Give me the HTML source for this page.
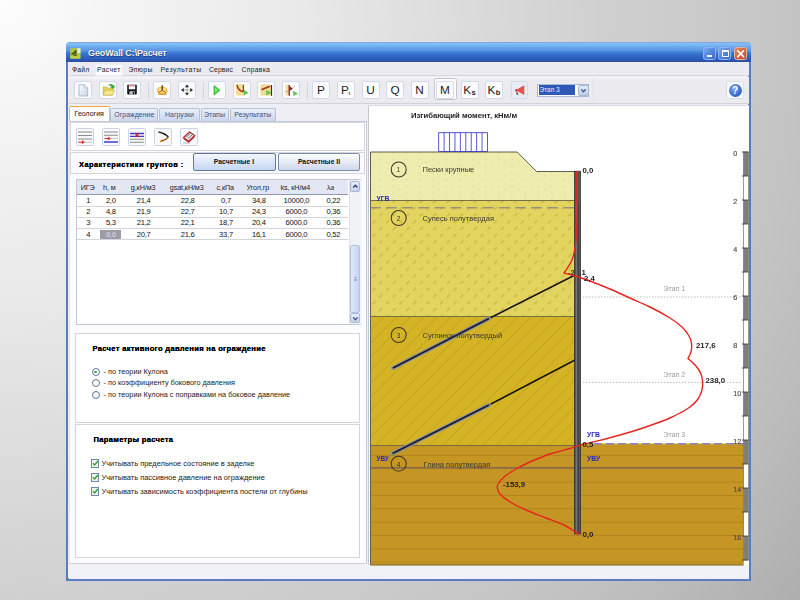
<!DOCTYPE html>
<html><head><meta charset="utf-8">
<style>
*{box-sizing:border-box;margin:0;padding:0}
html,body{width:800px;height:600px;overflow:hidden}
body{font-family:"Liberation Sans",sans-serif;font-size:7.5px;color:#111;
background:radial-gradient(circle 1000px at 0 0,#fdfdfd 0%,#f2f2f2 15%,#e9e9e9 30%,#dfdfdf 42%,#d0d0d0 60%,#c4c4c4 80%,#bababa 90%,#aeaeae 100%);position:relative}
.abs{position:absolute}
.wb{position:absolute;top:4.700px;width:13px;height:13px;border:1px solid #8cb4f2;border-radius:2.500px;background:linear-gradient(135deg,#7aaaf0,#4c80dc 60%,#3c6cc8)}
#win{position:absolute;left:66px;top:43px;width:685px;height:538px;background:#efeff4;border:2.5px solid #5a7cc0;border-right-width:3px;border-bottom-width:3px;border-top:none;border-radius:3.500px 3.500px 0 0;}
#title{position:absolute;left:66px;top:42.200px;width:685px;height:19.500px;border-radius:3.500px 3.500px 0 0;
background:linear-gradient(#7c9ed0 0%,#86bff8 7%,#7cbaf6 13%,#6aa8ec 26%,#5c98e4 41%,#4a8adc 48%,#3a7cd2 53%,#3670cc 62%,#3266c6 72%,#2d5ab6 88%,#2c4c9e 100%);}
#title .t{position:absolute;left:22px;top:6px;color:#f6f2e4;font-weight:bold;font-size:9px;letter-spacing:-0.100px;text-shadow:0.5px 0.5px 0 #1b3f8a}
#menu{position:absolute;left:68.5px;top:61.700px;width:680px;height:14.800px;background:#ecebf1;border-bottom:1px solid #d6d6dc}
#menu span{position:absolute;top:3.900px;font-size:6.8px;color:#222}
#tb{position:absolute;left:68.5px;top:76.500px;width:680px;height:27.800px;background:linear-gradient(#f8f8fb 0,#f1f0f5 5%,#ecebf0 12%,#ebeaef 100%);border-bottom:1px solid #d2d2d8}
.b{position:absolute;top:4px;width:18px;height:18px;border:1px solid #d3d9ea;background:#fbfcff;border-radius:2px}
.sep{position:absolute;top:5px;width:1px;height:17px;background:#d0d4e0}
.lt{position:absolute;top:4px;width:18px;height:18px;border:1px solid #d3d9ea;background:#fbfcff;border-radius:2px;font-size:11.800px;text-align:center;line-height:16.500px;color:#1c1c1c}

#tabs{position:absolute;left:68.5px;top:104.300px;width:299.500px;height:17px;background:#eeeef4}
.tab{position:absolute;top:4px;height:13px;border:1px solid #b9c3d6;border-bottom:none;border-radius:2px 2px 0 0;background:linear-gradient(#eaf0fa,#c9d6ee);font-size:7px;color:#44527a;text-align:center;line-height:11px}
.tab.act{top:1.5px;height:16px;background:#fcfcfe;border-color:#b9c3d6;border-top:1.5px solid #f0a83c;line-height:13px;color:#111}
.pan{position:absolute;background:#fff;border:1px solid #d4d6dc}
.ib{position:absolute;top:5px;border-radius:1.500px;width:18px;height:18px;border:1px solid #ccd3e6;background:#f8f9fd}
.xb{position:absolute;top:152.800px;height:18.200px;border:1px solid #7d8db0;border-radius:2px;background:linear-gradient(#fdfdff,#e2e7f2 60%,#cfd7ea);font-weight:bold;font-size:6.8px;text-align:center;line-height:16px;color:#111}
.hd{position:absolute;top:1px;height:14px;line-height:14px;font-size:7.200px;letter-spacing:-0.100px;color:#223;text-align:center;transform:translateX(-50%);white-space:nowrap}
.c{position:absolute;font-size:7.600px;letter-spacing:-0.250px;transform:translateX(-50%);white-space:nowrap;line-height:11px;color:#111}
.h1{position:absolute;font-weight:bold;font-size:7.6px;white-space:nowrap;color:#000;text-shadow:0 0 0.300px #000;letter-spacing:0.3px}
.tx{position:absolute;font-size:7.300px;white-space:nowrap;color:#222}
.rd{position:absolute;width:8px;height:8px;border:1px solid #5f7896;border-radius:50%;background:#fdfdfd}
.cb{position:absolute;width:8.500px;height:8.500px;border:1px solid #6f8aa8;background:#eef4ea;margin-left:-0.600px;margin-top:-0.300px}
</style></head><body>
<div id="wrap" style="position:absolute;left:0;top:0;width:800px;height:600px;filter:blur(0.5px)">
<div id="win"></div>
<div id="title"><div class="t">GeoWall C:\Расчет</div>
<svg class="abs" style="left:3.500px;top:5.500px" width="11" height="11" viewBox="0 0 11 11"><rect x="0.200" y="0.200" width="10.300" height="10.300" rx="1" fill="#b4c63a"/><rect x="7.200" y="0.200" width="3.300" height="5" fill="#dceaf8"/><path d="M1.500 6.500L6.500 2.200M5.800 2.500L6 8.800M4.200 5.200L4 8.500" stroke="#3a4a10" stroke-width="1.200" fill="none"/><rect x="0.200" y="8.300" width="10.300" height="2.200" rx="0.800" fill="#c4d840"/></svg>
<div class="wb" style="left:637px"><div class="abs" style="left:2.500px;top:7.500px;width:5px;height:2px;background:#f4f8ff"></div></div>
<div class="wb" style="left:652.300px"><div class="abs" style="left:2.500px;top:2.500px;width:7.500px;height:7px;border:1px solid #f4f8ff;border-top-width:2.200px"></div></div>
<div class="wb" style="left:667.600px;background:linear-gradient(135deg,#e8906c,#d4603c 50%,#c04c30);border-color:#e8b09c"><svg class="abs" style="left:0;top:0" width="11" height="11"><path d="M2.800 2.800L8.600 8.600M8.600 2.800L2.800 8.600" stroke="#fff" stroke-width="1.700" stroke-linecap="round"/></svg></div>
</div>
<div id="menu">
<div class="abs" style="left:26.500px;top:2px;width:27.500px;height:12.500px;background:#fafbfe;border:1px solid #eceef6"></div>
<span style="left:3.500px;letter-spacing:0.150px">Файл</span><span style="left:28.500px;letter-spacing:0.330px">Расчет</span><span style="left:60px;letter-spacing:0.400px">Эпюры</span><span style="left:92px;letter-spacing:0.550px">Результаты</span><span style="left:140.500px;letter-spacing:0.100px">Сервис</span><span style="left:173px;letter-spacing:0.280px">Справка</span>
</div>
<div id="tb"><div class="b" style="left:5.5px"><svg style="position:absolute;left:-1px;top:-1px" width="18" height="18" viewBox="0 0 18 18"><defs><linearGradient id="gnew" x1="0" y1="0" x2="1" y2="1"><stop offset="0" stop-color="#fbfcff"/><stop offset="1" stop-color="#cdd5e8"/></linearGradient></defs><path d="M5 3.800h5.500l3.200 3.200v8h-8.700z" fill="url(#gnew)" stroke="#a9b2cc" stroke-width="0.900"/><path d="M10.500 3.800v3.200h3.200" fill="#eef1f9" stroke="#a9b2cc" stroke-width="0.700"/></svg></div><div class="b" style="left:30.0px"><svg style="position:absolute;left:-1px;top:-1px" width="18" height="18" viewBox="0 0 18 18"><path d="M4.200 6h3.600l1 1.200h4.700v6.800H4.200z" fill="#ecd85c" stroke="#c0a838" stroke-width="0.700"/><path d="M4.200 14l1.800-4.800h9.500L13.600 14z" fill="#f6ec8e" stroke="#c8b040" stroke-width="0.700"/><path d="M9.500 4.200c2-1.600 4.300-1.100 5.200 1l1-.4-1.200 3-2.800-1.700 1.100-.3c-.7-1.200-1.800-1.700-3.300-1.600z" fill="#3aa83a" stroke="#2a8a2a" stroke-width="0.400"/></svg></div><div class="b" style="left:54.5px"><svg style="position:absolute;left:-1px;top:-1px" width="18" height="18" viewBox="0 0 18 18"><rect x="4.200" y="3.800" width="9.600" height="9.800" rx="0.800" fill="#16161a"/><rect x="5.800" y="4.300" width="6.400" height="4" fill="#f8f8fc"/><rect x="5.800" y="4.300" width="6.400" height="1.100" fill="#f08090"/><rect x="6.500" y="10.200" width="5.300" height="3.400" fill="#c0c4cc"/><rect x="9.800" y="10.800" width="1.400" height="2.400" fill="#16161a"/></svg></div><div class="b" style="left:84.5px"><svg style="position:absolute;left:-1px;top:-1px" width="18" height="18" viewBox="0 0 18 18"><ellipse cx="9.200" cy="9.600" rx="5.300" ry="4" fill="#f0b63e"/><ellipse cx="9.200" cy="9.200" rx="3.800" ry="2.800" fill="#f8de88"/><path d="M9.200 4.300v5.200" stroke="#3a2a10" stroke-width="1.200"/><path d="M5.500 11.500l3.700-2 3.700 2" stroke="#a06a18" stroke-width="1" fill="none"/><path d="M5 13.300h8.500" stroke="#d09030" stroke-width="1"/></svg></div><div class="b" style="left:109.5px"><svg style="position:absolute;left:-1px;top:-1px" width="18" height="18" viewBox="0 0 18 18"><path d="M9 3.500l2 2.800h-4zM9 14.500l2-2.800h-4zM3 9l2.800-2v4zM15 9l-2.800-2v4z" fill="#222"/><path d="M9 6.500v5M6 9h6" stroke="#555" stroke-width="0.800" stroke-dasharray="0.800 0.800"/></svg></div><div class="b" style="left:139.5px"><svg style="position:absolute;left:-1px;top:-1px" width="18" height="18" viewBox="0 0 18 18"><path d="M6 4.500L12 9.300l-6 4.700z" fill="#40cc40" stroke="#2cac2c" stroke-width="0.700" stroke-linejoin="round"/><path d="M6.800 6.500L10 9.300l-3.200 2.500z" fill="#88e888"/></svg></div><div class="b" style="left:164.0px"><svg style="position:absolute;left:-1px;top:-1px" width="18" height="18" viewBox="0 0 18 18"><rect x="3" y="3" width="8.500" height="11.500" fill="#f2e09a"/><path d="M4 4c.6 3.500 2.500 6 6.500 6.800" stroke="#b0381c" stroke-width="1.500" fill="none"/><path d="M10.300 4v6.500" stroke="#444" stroke-width="1.100"/><path d="M11 9.300l4.200 2.400-4.200 2.400z" fill="#58d058" stroke="#38a838" stroke-width="0.400"/></svg></div><div class="b" style="left:188.5px"><svg style="position:absolute;left:-1px;top:-1px" width="18" height="18" viewBox="0 0 18 18"><rect x="3.500" y="3.500" width="10.500" height="11" fill="#f2dc90"/><path d="M4.500 8.800l8.300-3.600" stroke="#a83020" stroke-width="1.700"/><path d="M14.500 4v10.800" stroke="#3a3020" stroke-width="1.200"/><path d="M9.600 9.300l4 2.400-4 2.400z" fill="#58d058" stroke="#38a838" stroke-width="0.400"/></svg></div><div class="b" style="left:213.0px"><svg style="position:absolute;left:-1px;top:-1px" width="18" height="18" viewBox="0 0 18 18"><rect x="3.500" y="3.500" width="3.200" height="11" fill="#f2e09a"/><path d="M7.200 4v10.800" stroke="#7a2018" stroke-width="1.300"/><path d="M7.500 5l3.300 2.800-3.300 2.200z" fill="#8a1c18"/><path d="M10 7.500l3-2.500M3.500 10.500h4" stroke="#b08070" stroke-width="0.600"/><path d="M11.500 10.200l4 2.300-4 2.300z" fill="#58d058" stroke="#38a838" stroke-width="0.400"/></svg></div><div class="sep" style="left:79.0px"></div><div class="sep" style="left:134.5px"></div><div class="sep" style="left:238.0px"></div><div class="abs" style="left:365.0px;top:1.500px;width:23px;height:22px;background:#fff;border:1px solid #c3c5cc;border-radius:2.500px"></div><div class="lt" style="left:243.5px">P</div><div class="lt" style="left:268.0px">P<span style="font-size:5.800px;margin-left:-0.300px;position:relative;top:1.300px">t</span></div><div class="lt" style="left:293.0px">U</div><div class="lt" style="left:317.5px">Q</div><div class="lt" style="left:342.0px">N</div><div class="lt" style="left:367.5px">M</div><div class="lt" style="left:392.0px">K<span style="font-size:7.500px;font-weight:bold;margin-left:0.300px;position:relative;top:1px">s</span></div><div class="lt" style="left:416.5px">K<span style="font-size:7.500px;font-weight:bold;margin-left:0.300px;position:relative;top:1px">b</span></div><div class="b" style="left:442.0px;width:17px;height:18px"><svg style="position:absolute;left:-1px;top:-1px" width="17" height="18" viewBox="0 0 17 18"><rect x="1" y="1" width="15" height="16" fill="#e9ecf3"/><path d="M4.500 9.300l8.800-5v9.600z" fill="#e25454"/><path d="M4.300 8.200h2v2.400h-2z" fill="#c43c3c"/><path d="M5 11.200h1.800l.6 2.800h-1.600z" fill="#a85050"/></svg></div><div class="abs" style="left:468.5px;top:7px;width:52px;height:13px;border:1px solid #aab8d8;background:#fff"></div><div class="abs" style="left:470.0px;top:8.500px;width:36.500px;height:10px;background:#2f58b8;color:#e8ecff;font-size:6.500px;line-height:10px;padding-left:1px">Этап 3</div><div class="abs" style="left:509.0px;top:8px;width:11px;height:11px;border:1px solid #a9b6d2;border-radius:2px;background:linear-gradient(#e6ecfa,#bccbec)"><svg width="9" height="9" style="position:absolute;left:0;top:0"><path d="M2.200 3.400L4.400 5.700L6.600 3.400" stroke="#3c4f7c" stroke-width="1.300" fill="none"/></svg></div><div class="abs" style="left:524.5px;top:1px;width:1px;height:25px;background:#dfe2ea"></div><div class="abs" style="left:657.500px;top:4.300px;width:18px;height:18.200px;border:1px solid #dcdfea;background:#f7f8fc;border-radius:2px"></div><div class="abs" style="left:660.0px;top:7px;width:13px;height:13px;border-radius:50%;background:radial-gradient(circle at 40% 35%,#7aa8f0,#2f62d0 70%,#2850b0);color:#fff;font-weight:bold;font-size:10px;text-align:center;line-height:13px">?</div></div>
<div id="tabs">
<div class="tab act" style="left:0.5px;width:40.5px">Геология</div>
<div class="tab" style="left:41.800px;width:48px">Ограждение</div>
<div class="tab" style="left:90.800px;width:40.300px">Нагрузки</div>
<div class="tab" style="left:132px;width:28px">Этапы</div>
<div class="tab" style="left:161px;width:46.500px">Результаты</div>
</div>
<div id="left" class="abs" style="left:69px;top:120.500px;width:297.500px;height:443.500px;background:#fcfcfe;border:1px solid #c3cbdb;border-left-color:#e4e8f2;border-bottom-color:#cfd3de">
</div>
<div class="pan" id="p1" style="left:70px;top:121.500px;width:295px;height:29.500px">
 <div class="ib" style="left:5.0px"><svg style="position:absolute;left:-1px;top:-1px" width="18" height="18" viewBox="0 0 18 18"><path d="M2 4h14M2 7.500h14M2 11h14" stroke="#8a8a8a" stroke-width="1.100"/><path d="M2.500 14.200h13.500" stroke="#aaa" stroke-width="0.600"/><path d="M2.500 14.200h5M6 12.800l2 1.400-2 1.400" stroke="#e03030" stroke-width="1.100" fill="none"/></svg></div>
 <div class="ib" style="left:30.5px"><svg style="position:absolute;left:-1px;top:-1px" width="18" height="18" viewBox="0 0 18 18"><path d="M2 4h14M2 7.200h14" stroke="#8a8a8a" stroke-width="1.100"/><path d="M2.500 10.500h13.500" stroke="#aaa" stroke-width="0.600"/><path d="M2.500 10.500h5M6 9.100l2 1.400-2 1.400" stroke="#e03030" stroke-width="1.100" fill="none"/><path d="M2 14h14" stroke="#3030d0" stroke-width="1.400"/></svg></div>
 <div class="ib" style="left:56.5px"><svg style="position:absolute;left:-1px;top:-1px" width="18" height="18" viewBox="0 0 18 18"><path d="M2 5.500h14M2 8.300h14" stroke="#3838d0" stroke-width="1.300"/><path d="M7 5l4 4M11 5l-4 4" stroke="#e02828" stroke-width="1.300"/><path d="M2 11.200h14M2 14.200h14" stroke="#8a8a8a" stroke-width="1.100"/></svg></div>
 <div class="ib" style="left:82.5px"><svg style="position:absolute;left:-1px;top:-1px" width="18" height="18" viewBox="0 0 18 18"><path d="M4.500 4c4 .8 7.800 2.500 9.800 5.200" stroke="#2a2220" stroke-width="1.600" fill="none"/><path d="M14.300 9.200c-2 2.300-5 3.600-8.300 4.300" stroke="#e08838" stroke-width="1.300" fill="none"/><path d="M14.300 9.200c-2 2-4.500 3.200-7.300 3.800" stroke="#503020" stroke-width="0.600" fill="none"/></svg></div>
 <div class="ib" style="left:108.5px"><svg style="position:absolute;left:-1px;top:-1px" width="18" height="18" viewBox="0 0 18 18"><path d="M3.500 9.500l6-5.500 5.200 3.500-6 5.800z" fill="#f4f0ec" stroke="#b02828" stroke-width="1.200"/><path d="M3.500 9.500l5.200 3.800 6-5.800v1.800l-6 5.800-5.200-3.800z" fill="#c03030"/><path d="M6 9.300l4.500-4M8 10.500l4.500-4" stroke="#333" stroke-width="0.700"/><path d="M3 15h7" stroke="#999" stroke-width="0.700"/></svg></div>
</div>
<div class="pan" id="p2" style="left:70px;top:152px;width:295px;height:22px;background:#fbfbfd"></div>
<div class="h1" style="left:79px;top:159.5px;font-size:7.4px;letter-spacing:0.45px">Характеристики грунтов :</div>
<div class="xb" style="left:192.500px;width:83px;background:linear-gradient(#f4f7fe,#dbe5f8 55%,#c6d5f1);border-color:#62789f">Расчетные I</div>
<div class="xb" style="left:278px;width:82px">Расчетные II</div>
<div class="pan" id="tbl" style="left:75.5px;top:179px;width:285px;height:146px;border-color:#c4c8d0">
 <div class="abs" style="left:0;top:0;width:271px;height:14.700px;background:#e2e7f3;border-bottom:1.200px solid #8f98ae"></div>
 <div class="hd" style="left:11.1px">ИГЭ</div><div class="hd" style="left:32.9px">h, м</div><div class="hd" style="left:66.6px">g,кН/м3</div><div class="hd" style="left:110.2px">gsat,кН/м3</div><div class="hd" style="left:148.7px">c,кПа</div><div class="hd" style="left:181.3px">Угол,гр</div><div class="hd" style="left:218.8px">ks, кН/м4</div><div class="hd" style="left:254.0px">λ<i style="font-size:6.500px">a</i></div>
 <div id="rows" style="position:absolute;left:0;top:0"><div class="abs" style="left:0;top:25.50px;width:271px;height:1px;background:#d3d5dc"></div><div class="c" style="left:11.7px;top:14.90px">1</div><div class="c" style="left:34.3px;top:14.90px">2,0</div><div class="c" style="left:67.1px;top:14.90px">21,4</div><div class="c" style="left:111.2px;top:14.90px">22,8</div><div class="c" style="left:149.5px;top:14.90px">0,7</div><div class="c" style="left:182.3px;top:14.90px">34,8</div><div class="c" style="left:219.9px;top:14.90px">10000,0</div><div class="c" style="left:256.8px;top:14.90px">0,22</div><div class="abs" style="left:0;top:36.75px;width:271px;height:1px;background:#d3d5dc"></div><div class="c" style="left:11.7px;top:26.10px">2</div><div class="c" style="left:34.3px;top:26.10px">4,8</div><div class="c" style="left:67.1px;top:26.10px">21,9</div><div class="c" style="left:111.2px;top:26.10px">22,7</div><div class="c" style="left:149.5px;top:26.10px">10,7</div><div class="c" style="left:182.3px;top:26.10px">24,3</div><div class="c" style="left:219.9px;top:26.10px">6000,0</div><div class="c" style="left:256.8px;top:26.10px">0,36</div><div class="abs" style="left:0;top:48.00px;width:271px;height:1px;background:#d3d5dc"></div><div class="c" style="left:11.7px;top:37.40px">3</div><div class="c" style="left:34.3px;top:37.40px">5,3</div><div class="c" style="left:67.1px;top:37.40px">21,2</div><div class="c" style="left:111.2px;top:37.40px">22,1</div><div class="c" style="left:149.5px;top:37.40px">18,7</div><div class="c" style="left:182.3px;top:37.40px">20,4</div><div class="c" style="left:219.9px;top:37.40px">6000,0</div><div class="c" style="left:256.8px;top:37.40px">0,36</div><div class="abs" style="left:0;top:59.25px;width:271px;height:1px;background:#d3d5dc"></div><div class="abs" style="left:23.100px;top:49.80px;width:21px;height:9.600px;background:#9c9ca6"></div><div class="c" style="left:11.7px;top:48.90px">4</div><div class="c" style="left:34.3px;top:48.90px;color:#dcdce4">8,6</div><div class="c" style="left:67.1px;top:48.90px">20,7</div><div class="c" style="left:111.2px;top:48.90px">21,6</div><div class="c" style="left:149.5px;top:48.90px">33,7</div><div class="c" style="left:182.3px;top:48.90px">16,1</div><div class="c" style="left:219.9px;top:48.90px">6000,0</div><div class="c" style="left:256.8px;top:48.90px">0,52</div></div>
 <div class="abs" style="left:272px;top:0;width:12px;height:144px;background:#f1f2f7;border-left:1px solid #dde0e8"></div>
 <div class="abs" style="left:273px;top:1px;width:10.5px;height:10.5px;border:1px solid #a9b6d2;border-radius:2px;background:linear-gradient(#e6ecfa,#c6d3ee)"><svg width="9" height="9" style="position:absolute;left:0;top:0"><path d="M2.2 5.5 L4.4 3.2 L6.6 5.5" stroke="#3c4f7c" stroke-width="1.3" fill="none"/></svg></div>
 <div class="abs" style="left:273px;top:132.5px;width:10.5px;height:10.5px;border:1px solid #a9b6d2;border-radius:2px;background:linear-gradient(#e6ecfa,#c6d3ee)"><svg width="9" height="9" style="position:absolute;left:0;top:0"><path d="M2.2 3.4 L4.4 5.7 L6.6 3.4" stroke="#3c4f7c" stroke-width="1.3" fill="none"/></svg></div>
 <div class="abs" style="left:273px;top:64.500px;width:10.500px;height:68.500px;border:1px solid #b4c2e0;border-radius:2px;background:linear-gradient(90deg,#dfe8fb,#c4d3f2)"><div class="abs" style="left:3px;top:31px;width:3.500px;height:4.500px;border-top:1px solid #9fb0d4;border-bottom:1px solid #9fb0d4"><div class="abs" style="left:0;top:1px;width:3.500px;height:1px;background:#9fb0d4"></div></div></div>
</div>
<div class="pan" id="p3" style="left:75px;top:332.5px;width:285px;height:90.5px"></div>
<div class="pan" id="p4" style="left:75px;top:424px;width:285px;height:134px"></div>
<div class="h1" style="left:92.5px;top:344px">Расчет активного давления на ограждение</div>
<div class="rd" style="left:91.5px;top:368px"><div class="abs" style="left:1.5px;top:1.5px;width:2.8px;height:2.8px;border-radius:50%;background:#3fa53f"></div></div>
<div class="rd" style="left:91.5px;top:379.100px"></div>
<div class="rd" style="left:91.5px;top:391.300px"></div>
<div class="tx" style="left:103.5px;top:366.800px">- по теории Кулона</div>
<div class="tx" style="left:103.5px;top:378.100px">- по коэффициенту бокового давления</div>
<div class="tx" style="left:103.5px;top:390.400px">- по теории Кулона с поправками на боковое давление</div>
<div class="h1" style="left:93.5px;top:434.600px">Параметры расчета</div>
<div class="cb" style="left:91.5px;top:459.5px"><svg class="abs" style="left:0;top:0" width="7" height="7"><path d="M1 3.200L2.700 5L5.800 1" stroke="#30a030" stroke-width="1.300" fill="none"/></svg></div><div class="cb" style="left:91.5px;top:473.5px"><svg class="abs" style="left:0;top:0" width="7" height="7"><path d="M1 3.200L2.700 5L5.800 1" stroke="#30a030" stroke-width="1.300" fill="none"/></svg></div><div class="cb" style="left:91.5px;top:487.5px"><svg class="abs" style="left:0;top:0" width="7" height="7"><path d="M1 3.200L2.700 5L5.800 1" stroke="#30a030" stroke-width="1.300" fill="none"/></svg></div>
<div class="tx" style="font-size:7.450px;left:101.5px;top:458.600px">Учитывать предельное состояние в заделке</div>
<div class="tx" style="font-size:7.450px;left:101.5px;top:472.600px">Учитывать пассивное давление на ограждение</div>
<div class="tx" style="font-size:7.450px;left:101.5px;top:486.600px">Учитывать зависимость коэффициента постели от глубины</div>
<div id="status" class="abs" style="left:68.5px;top:565px;width:680px;height:13.5px;background:#f1f2f8"></div>
<div id="right" class="abs" style="left:368px;top:105px;width:381px;height:460px;background:#fff;border-left:1px solid #c6c8d0;border-top:1px solid #d8dae2"></div>

<svg id="dg" class="abs" style="left:0;top:0" width="800" height="600" viewBox="0 0 800 600">
<defs>
<pattern id="sp1" width="13.2" height="13.5" patternUnits="userSpaceOnUse" x="485" y="159">
 <rect x="0" y="0" width="1.200" height="1.200" fill="#d4d094"/><rect x="0" y="6.750" width="1.200" height="1.200" fill="#d4d094"/><rect x="6.400" y="2.800" width="1.200" height="1.200" fill="#d8d49a"/>
</pattern>
<pattern id="sp2" width="13.5" height="13.5" patternUnits="userSpaceOnUse" x="371.500" y="205.800">
 <path d="M1 4L4 1M7.750 10.750L10.750 7.750" stroke="#c4b43e" stroke-width="1.150"/>
</pattern>
<pattern id="sp3" width="13.4" height="13.4" patternUnits="userSpaceOnUse" x="370" y="317">
 <path d="M-1 14.400L14.400 -1M-1 1L1 -1M12.400 14.400L14.400 12.400" stroke="#b4981c" stroke-width="0.800"/>
</pattern>
<pattern id="sp4" width="20" height="13.350" patternUnits="userSpaceOnUse" x="370" y="454.900">
 <path d="M0 0.400H20" stroke="#ab801c" stroke-width="0.900"/>
</pattern>
</defs>
<!-- layer 1 -->
<path d="M370.500 152H517.200L536.500 171.500H575V200.500H370.500z" fill="#efecb0"/>
<path d="M370.500 152H517.200L536.500 171.500H575V200.500H370.500z" fill="url(#sp1)"/>
<!-- layer 2 -->
<rect x="370.500" y="200.500" width="204.500" height="116" fill="#e3d45f"/>
<rect x="370.500" y="200.500" width="204.500" height="116" fill="url(#sp2)"/>
<!-- layer 3 -->
<rect x="370.500" y="316.500" width="204.500" height="129" fill="#d4b424"/>
<rect x="370.500" y="316.500" width="204.500" height="129" fill="url(#sp3)"/>
<!-- layer 4 -->
<rect x="580.500" y="444" width="163" height="121" fill="#c59624"/>
<rect x="370.500" y="445.500" width="373" height="119.500" fill="#c59624"/>
<rect x="370.500" y="446" width="373" height="119" fill="url(#sp4)"/>

<!-- outlines -->
<path d="M370.500 565V152H517.200L536.500 171.500H575" fill="none" stroke="#5e5e50" stroke-width="1"/>
<path d="M370.500 200.500H575M370.500 316.500H575M370.500 445.500H575" stroke="#6a6440" stroke-width="0.900"/>
<path d="M370.500 565H743.500" stroke="#7a6420" stroke-width="1"/>
<path d="M580.500 444H743.500" stroke="#8a7a40" stroke-width="0.800"/>
<!-- load -->
<g stroke="#3030c8" stroke-width="0.800" fill="none">
<rect x="438.700" y="132.700" width="48.800" height="18.800"/>
<path d="M444.12 132.700v18.800M449.54 132.700v18.800M454.96 132.700v18.800M460.38 132.700v18.800M465.80 132.700v18.800M471.22 132.700v18.800M476.64 132.700v18.800M482.06 132.700v18.800"/>
</g>
<!-- water dashed -->
<path d="M370.500 207.800H575" stroke="#9a917a" stroke-width="1.400" stroke-dasharray="10.600 5.500" stroke-dashoffset="0.350"/>
<!-- UVU line -->
<path d="M370.500 467.800H743.500" stroke="#6a4e66" stroke-width="0.950"/>
<!-- right water dashed -->
<path d="M580.500 443.600H743.500" stroke="#e8d860" stroke-width="1.200"/><path d="M594 443.600H743.500" stroke="#8080d8" stroke-width="1.200" stroke-dasharray="8 4"/>
<!-- stage dotted -->
<path d="M583 297H741M583 382.400H741" stroke="#aaa" stroke-width="0.800" stroke-dasharray="1.500 1.500"/>
<!-- anchors -->
<path d="M575 275L489 318.500" stroke="#151515" stroke-width="1.450"/>
<path d="M489 318.500L393 368" stroke="#868ea8" stroke-width="3.900" stroke-linecap="round"/>
<path d="M489 318.500L393 368" stroke="#1c1c24" stroke-width="1.800"/>
<path d="M575 360L489 405" stroke="#151515" stroke-width="1.450"/>
<path d="M489 405L392.500 453.500" stroke="#868ea8" stroke-width="3.900" stroke-linecap="round"/>
<path d="M489 405L392.500 453.500" stroke="#1c1c24" stroke-width="1.800"/>
<text x="568" y="275" font-family="Liberation Sans, sans-serif" font-size="7.800" font-weight="bold" fill="#222">-28,1</text>
<!-- wall -->
<rect x="574.500" y="171" width="6" height="363" fill="#767676"/>
<path d="M574.800 171V534M578.100 171V534M580.200 171V534" stroke="#2a2a2a" stroke-width="1.150"/>
<path d="M574.500 171.300H580.500M574.500 533.800H580.500" stroke="#353535" stroke-width="0.900"/>
<rect x="575.300" y="171.500" width="2.900" height="31" fill="#b43232"/>
<rect x="578.200" y="171.500" width="2" height="31" fill="#5a5a5a"/>
<!-- moment curve -->
<path id="mc" d="M577.0 171.0 C577.0 176.7 577.1 194.8 577.0 205.0 C576.9 215.2 576.9 224.8 576.6 232.0 C576.3 239.2 575.8 243.3 575.0 248.0 C574.2 252.7 573.2 256.8 572.0 260.0 C570.8 263.2 569.3 264.8 568.0 267.0 C566.7 269.2 564.7 272.0 564.0 273.0 L564.0 273.0 C565.8 273.5 570.7 274.7 575.0 276.0 C579.3 277.3 584.2 278.8 590.0 281.0 C595.8 283.2 603.3 286.2 610.0 289.0 C616.7 291.8 623.3 295.0 630.0 298.0 C636.7 301.0 643.3 303.7 650.0 307.0 C656.7 310.3 664.7 314.7 670.0 318.0 C675.3 321.3 678.8 324.0 682.0 327.0 C685.2 330.0 687.4 333.2 689.0 336.0 C690.6 338.8 691.3 341.3 691.6 344.0 C691.9 346.7 691.6 349.6 691.0 352.0 C690.4 354.4 688.5 357.3 688.0 358.4 L688.0 358.4 C689.3 359.7 693.8 363.4 696.0 366.0 C698.2 368.6 699.9 371.3 701.0 374.0 C702.1 376.7 702.4 379.3 702.6 382.0 C702.8 384.7 702.8 387.2 702.0 390.0 C701.2 392.8 700.0 396.2 698.0 399.0 C696.0 401.8 693.0 404.7 690.0 407.0 C687.0 409.3 683.3 411.2 680.0 413.0 C676.7 414.8 673.3 416.5 670.0 418.0 C666.7 419.5 665.0 420.2 660.0 422.0 C655.0 423.8 646.7 426.8 640.0 429.0 C633.3 431.2 626.7 433.1 620.0 435.0 C613.3 436.9 606.3 438.8 600.0 440.4 C593.7 442.0 587.0 443.2 582.0 444.6 C577.0 446.0 575.3 446.9 570.0 448.5 C564.7 450.1 556.7 451.8 550.0 454.0 C543.3 456.2 535.7 459.5 530.0 462.0 C524.3 464.5 520.3 466.5 516.0 469.0 C511.7 471.5 507.0 474.5 504.0 477.0 C501.0 479.5 499.1 482.2 498.0 484.0 C496.9 485.8 497.1 486.3 497.4 488.0 C497.7 489.7 497.9 491.7 500.0 494.0 C502.1 496.3 505.7 499.3 510.0 502.0 C514.3 504.7 520.0 507.3 526.0 510.0 C532.0 512.7 539.7 515.5 546.0 518.0 C552.3 520.5 558.8 522.5 564.0 525.0 C569.2 527.5 574.8 531.7 577.0 533.0" fill="none" stroke="#e8241e" stroke-width="1.400" stroke-linejoin="round"/>
<rect x="575.500" y="531.500" width="3" height="3" fill="#d03030"/>
<!-- circles -->
<g fill="none" stroke="#3e3828" stroke-width="1.050">
<circle cx="398.700" cy="169.500" r="7.500"/><circle cx="398.700" cy="218" r="7.500"/><circle cx="398.700" cy="335" r="7.500"/><circle cx="398.700" cy="463.700" r="7.500"/>
</g>
<g font-family="Liberation Sans, sans-serif" font-size="6.500" fill="#333" text-anchor="middle">
<text x="398.500" y="172">1</text><text x="398.500" y="220.500">2</text><text x="398.500" y="337.500">3</text><text x="398.500" y="466.500">4</text>
</g>
<g font-family="Liberation Sans, sans-serif" font-size="7.500" fill="#3a3a30">
<text x="422.500" y="172">Пески крупные</text>
<text x="422.500" y="220.500">Супесь полутвердая</text>
<text x="422.500" y="337.500">Суглинок полутвердый</text>
<text x="423.500" y="466.500">Глина полутвердая</text>
</g>
<g font-family="Liberation Sans, sans-serif" font-size="6.800" font-weight="bold" fill="#2828c0">
<text x="376.500" y="201">УГВ</text>
<text x="587" y="436.800">УГВ</text>
<text x="587" y="461">УВУ</text>
<text x="376.500" y="460.500" font-size="6.400">УВУ</text>
</g>
<g font-family="Liberation Sans, sans-serif" font-size="7.800" font-weight="bold" fill="#222">
<text x="582.500" y="172.500">0,0</text>

<text x="584" y="280.500">2,4</text>
<text x="696" y="348">217,6</text>
<text x="705.500" y="383.300">238,0</text>
<text x="582.500" y="447.300">0,5</text>
<text x="582.500" y="536.500">0,0</text>
<text x="503" y="487.300">-153,9</text>
</g>
<g font-family="Liberation Sans, sans-serif" font-size="7" fill="#9a9a9a">
<text x="663.500" y="290.600">Этап 1</text><text x="663.500" y="376.600">Этап 2</text><text x="663.500" y="437">Этап 3</text>
</g>
<text x="411" y="118" font-family="Liberation Sans, sans-serif" font-size="7.700" font-weight="bold" fill="#222">Изгибающий момент, кНм/м</text>
<!-- ruler -->
<rect x="743.500" y="152" width="5" height="408" fill="#fff" stroke="#555" stroke-width="0.600"/>
<g fill="#7e7e7e">
<rect x="743.500" y="152" width="5" height="24"/><rect x="743.500" y="200" width="5" height="24"/><rect x="743.500" y="248" width="5" height="24"/><rect x="743.500" y="296" width="5" height="24"/><rect x="743.500" y="344" width="5" height="24"/><rect x="743.500" y="392" width="5" height="24"/><rect x="743.500" y="440" width="5" height="24"/><rect x="743.500" y="488" width="5" height="24"/><rect x="743.500" y="536" width="5" height="24"/>
</g>
<g font-family="Liberation Sans, sans-serif" font-size="7.200" fill="#4c4c4c" stroke="#4c4c4c" stroke-width="0.150"><text x="733.200" y="155.9">0</text><text x="733.200" y="203.9">2</text><text x="733.200" y="251.9">4</text><text x="733.200" y="299.9">6</text><text x="733.200" y="347.9">8</text><text x="733.200" y="395.9">10</text><text x="733.200" y="443.9">12</text><text x="733.200" y="491.9">14</text><text x="733.200" y="539.9">16</text></g>
<path d="M742 152.0H748.500M742 176.0H748.500M742 200.0H748.500M742 224.0H748.500M742 248.0H748.500M742 272.0H748.500M742 296.0H748.500M742 320.0H748.500M742 344.0H748.500M742 368.0H748.500M742 392.0H748.500M742 416.0H748.500M742 440.0H748.500M742 464.0H748.500M742 488.0H748.500M742 512.0H748.500M742 536.0H748.500M742 560.0H748.500" stroke="#333" stroke-width="0.800"/>
</svg>
</div>
</body></html>
